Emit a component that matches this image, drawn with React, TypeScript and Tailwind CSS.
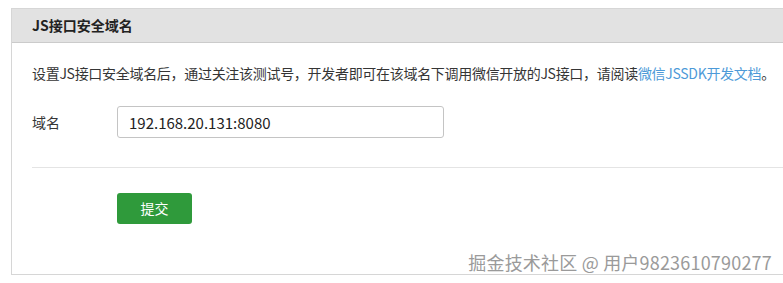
export default function App() {
  return (
    <div
      className="relative w-[783px] h-[283px] overflow-hidden bg-white pl-[11px] pt-[8px] text-[#353535]"
      style={{ fontFamily: '"Microsoft YaHei", "Noto Sans CJK SC", "Liberation Sans", sans-serif' }}
    >
      <div className="w-[800px] h-[267px] border border-[#d6d6d6] bg-white">
        <div className="h-[34px] flex items-center pl-[20px] bg-[#e2e2e2] border-b border-[#cbcbcb]">
          <h2 className="text-[14px] font-bold text-[#222]">JS接口安全域名</h2>
        </div>
        <div className="pl-[20px] pt-[19px]">
          <p className="text-[14px] leading-[22px] tracking-[-0.3px] whitespace-nowrap">
            设置JS接口安全域名后，通过关注该测试号，开发者即可在该域名下调用微信开放的JS接口，请阅读
            <a className="text-[#4d9ad8]">微信JSSDK开发文档</a>。
          </p>
          <div className="flex items-center mt-[22px]">
            <label className="w-[85px] text-[14px]">域名</label>
            <input
              className="w-[327px] h-[32px] border border-[#c4c4c4] rounded-[3px] px-[11px] text-[15px] text-[#222] outline-none"
              defaultValue="192.168.20.131:8080"
            />
          </div>
          <div className="mt-[29px] border-t border-[#e4e4e4]" />
          <button className="ml-[85px] mt-[25px] w-[75px] h-[31px] rounded-[3px] bg-[#2f9a3b] text-white text-[14px]">
            提交
          </button>
        </div>
      </div>
      <div
        className="absolute right-[11px] top-[249px] text-[18px] text-[#9a9a9a] tracking-[0.2px]"
        style={{ textShadow: '0 0 1px #fff, 1px 1px 0 #fff' }}
      >
        掘金技术社区 @ 用户9823610790277
      </div>
    </div>
  );
}
